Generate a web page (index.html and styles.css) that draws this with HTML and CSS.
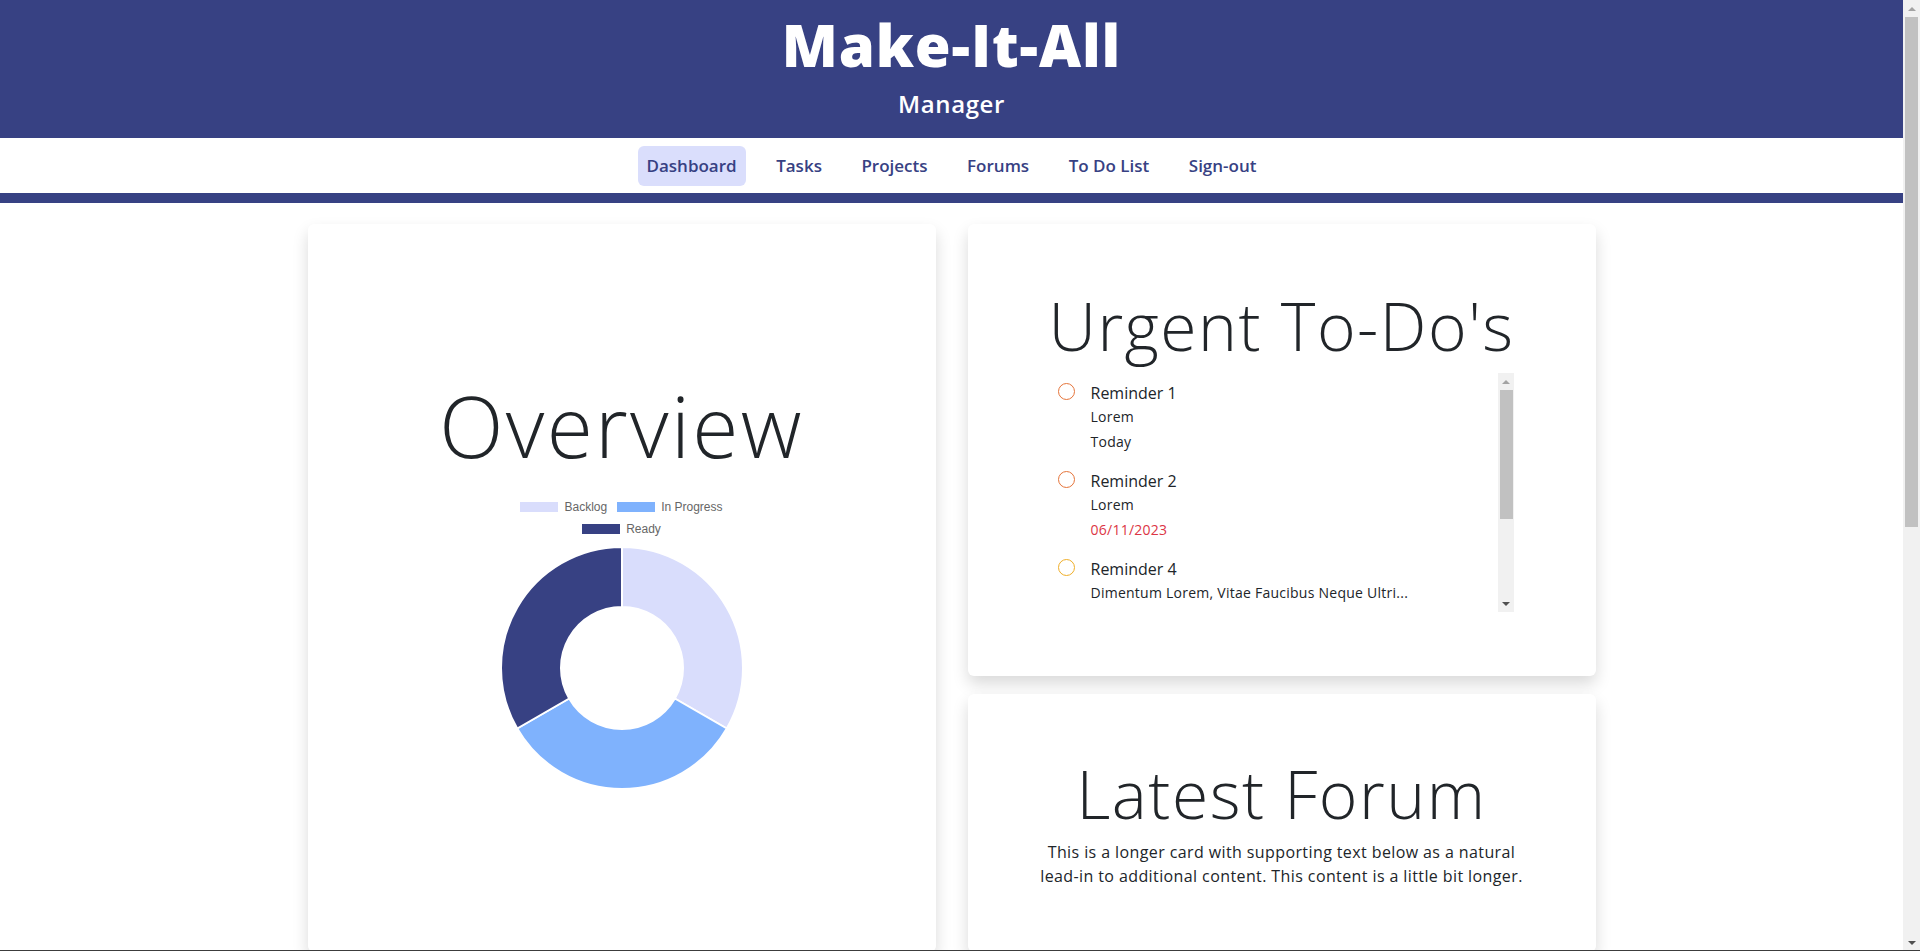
FILE: index.html
```html
<!DOCTYPE html>
<html lang="en">
<head>
<meta charset="utf-8">
<title>Make-It-All Manager - Dashboard</title>
<link rel="stylesheet" href="styles.css">
</head>
<body>
<div class="page">
  <header class="site-header">
    <h1 class="brand">Make-It-All</h1>
    <p class="brand-sub">Manager</p>
  </header>
  <nav class="main-nav">
    <a class="nav-link active" href="#">Dashboard</a>
    <a class="nav-link" href="#">Tasks</a>
    <a class="nav-link" href="#">Projects</a>
    <a class="nav-link" href="#">Forums</a>
    <a class="nav-link" href="#">To Do List</a>
    <a class="nav-link" href="#">Sign-out</a>
  </nav>
  <main class="dashboard">
    <section class="card card-overview">
      <h2 class="display display-lg">Overview</h2>
      <div class="legend">
        <span class="legend-item"><span class="legend-box backlog"></span>Backlog</span>
        <span class="legend-item"><span class="legend-box progress"></span>In Progress</span>
        <span class="legend-item"><span class="legend-box ready"></span>Ready</span>
      </div>
      <svg class="donut" width="244" height="244" viewBox="0 0 244 244">
        <path class="seg-backlog" d="M122,1 A121,121 0 0 1 226.79,182.5 L174.83,152.5 A61,61 0 0 0 122,61 Z"/>
        <path class="seg-progress" d="M226.79,182.5 A121,121 0 0 1 17.21,182.5 L69.17,152.5 A61,61 0 0 0 174.83,152.5 Z"/>
        <path class="seg-ready" d="M17.21,182.5 A121,121 0 0 1 122,1 L122,61 A61,61 0 0 0 69.17,152.5 Z"/>
      </svg>
    </section>
    <div class="right-col">
      <section class="card card-todo">
        <h2 class="display">Urgent To-Do's</h2>
        <div class="todo-box">
          <ul class="todo-list">
            <li class="todo-item">
              <span class="todo-check check-orange"></span>
              <div class="todo-body">
                <div class="todo-title">Reminder 1</div>
                <div class="todo-line">Lorem</div>
                <div class="todo-line">Today</div>
              </div>
            </li>
            <li class="todo-item">
              <span class="todo-check check-orange"></span>
              <div class="todo-body">
                <div class="todo-title">Reminder 2</div>
                <div class="todo-line">Lorem</div>
                <div class="todo-line overdue">06/11/2023</div>
              </div>
            </li>
            <li class="todo-item">
              <span class="todo-check check-yellow"></span>
              <div class="todo-body">
                <div class="todo-title">Reminder 4</div>
                <div class="todo-line">Dimentum Lorem, Vitae Faucibus Neque Ultri...</div>
              </div>
            </li>
          </ul>
          <div class="scrollbar list-scrollbar">
            <span class="sb-arrow sb-up"></span>
            <span class="sb-thumb"></span>
            <span class="sb-arrow sb-down"></span>
          </div>
        </div>
      </section>
      <section class="card card-forum">
        <h2 class="display">Latest Forum</h2>
        <p class="forum-text">This is a longer card with supporting text below as a natural lead-in to additional content. This content is a little bit longer.</p>
      </section>
    </div>
  </main>
</div>
<div class="scrollbar page-scrollbar">
  <span class="sb-arrow sb-up"></span>
  <span class="sb-thumb"></span>
  <span class="sb-arrow sb-down"></span>
</div>
<div class="window-edge"></div>
</body>
</html>
```

FILE: styles.css
```css
* { box-sizing: border-box; }

html, body { margin: 0; padding: 0; }

body {
  font-family: "Open Sans", "Noto Sans", sans-serif;
  color: #212529;
  background: #fff;
}

.page {
  margin-right: 17px;
  min-height: 1710px;
}

/* Scrollbars (drawn) */
.scrollbar {
  display: flex;
  flex-direction: column;
  align-items: center;
  background: #f1f1f1;
}
.sb-arrow {
  flex-shrink: 0;
  width: 100%;
  height: 17px;
  display: flex;
  justify-content: center;
  align-items: center;
}
.sb-arrow::before {
  content: "";
  width: 0;
  height: 0;
  border-left: 4px solid transparent;
  border-right: 4px solid transparent;
}
.sb-up::before { border-bottom: 4px solid #a3a3a3; }
.sb-down { margin-top: auto; }
.sb-down::before { border-top: 4px solid #505050; }
.sb-thumb { background: #c1c1c1; flex-shrink: 0; }

.page-scrollbar {
  position: fixed;
  top: 0;
  right: 0;
  width: 17px;
  height: 100vh;
}
.page-scrollbar .sb-thumb {
  width: 13px;
  height: 510px;
}

.list-scrollbar {
  width: 16px;
  height: 100%;
  flex-shrink: 0;
}
.list-scrollbar .sb-thumb {
  width: 13px;
  margin-left: 1px;
  height: 129px;
}

/* Header */
.site-header {
  background: #374183;
  color: #fff;
  text-align: center;
  height: 138px;
  padding-top: 16px;
}
.brand {
  margin: 0;
  font-size: 58px;
  font-weight: 800;
  line-height: 1;
  letter-spacing: 0.9px;
}
.brand-sub {
  margin: 18px 0 0;
  font-size: 24px;
  font-weight: 600;
  line-height: 1;
  letter-spacing: 0.6px;
}

/* Nav */
.main-nav {
  height: 65px;
  background: #fff;
  border-bottom: 10px solid #374183;
  display: flex;
  justify-content: center;
  align-items: flex-start;
  gap: 21.5px;
  padding-top: 8px;
}
.nav-link {
  display: block;
  padding: 8px 9px;
  line-height: 24px;
  font-size: 17px;
  font-weight: 600;
  color: #374183;
  text-decoration: none;
  border-radius: 6px;
}
.nav-link.active { background: #dadefc; }

/* Main grid */
.dashboard {
  width: 1288px;
  margin: 21px auto 0;
  display: grid;
  grid-template-columns: 628px 628px;
  column-gap: 32px;
}
.right-col {
  display: flex;
  flex-direction: column;
  gap: 18px;
}
.card {
  background: #fff;
  border-radius: 6px;
  box-shadow: 0 8px 16px rgba(0, 0, 0, 0.15);
  text-align: center;
}

.display {
  margin: 0;
  font-size: 66px;
  font-weight: 300;
  line-height: 1.2;
  letter-spacing: 1.5px;
  color: #212529;
}
.display-lg { font-size: 84px; letter-spacing: 2.3px; }

/* Overview */
.card-overview { padding-top: 152px; }
.legend {
  width: 210px;
  margin: 20px auto 0;
  display: flex;
  flex-wrap: wrap;
  justify-content: center;
  column-gap: 10px;
  row-gap: 2px;
  font-family: "Liberation Sans", Arial, sans-serif;
  font-size: 12px;
  color: #666;
}
.legend-item {
  display: flex;
  align-items: center;
  height: 20px;
  white-space: nowrap;
}
.legend-box {
  width: 38px;
  height: 10px;
  margin-right: 6px;
}
.legend-box.backlog { background: #d9ddfc; }
.legend-box.progress { background: #7fb2fd; }
.legend-box.ready { background: #374183; }

.donut { display: block; margin: 7px auto 0; }
.donut path { stroke: #fff; stroke-width: 2; }
.seg-backlog { fill: #d9ddfc; }
.seg-progress { fill: #7fb2fd; }
.seg-ready { fill: #374183; }

/* To-do */
.card-todo { padding: 62px 16px 64px; }
.card-todo .display { margin-bottom: 8px; }
.todo-box {
  display: flex;
  width: 464px;
  height: 239px;
  margin: 0 auto;
}
.todo-list {
  flex: 1;
  list-style: none;
  margin: 0;
  padding: 8px 0 0 8px;
  overflow: hidden;
  text-align: left;
}
.todo-item {
  display: flex;
  align-items: flex-start;
  margin-bottom: 15px;
}
.todo-item:last-child { margin-bottom: 0; }
.todo-check {
  flex-shrink: 0;
  width: 17px;
  height: 17px;
  margin-top: 2px;
  margin-right: 16px;
  border-radius: 50%;
  border: 1.7px solid #e5743a;
}
.todo-check.check-yellow { border-color: #efae28; }
.todo-title { font-size: 16px; line-height: 24px; }
.todo-line { font-size: 14px; line-height: 24px; letter-spacing: 0.25px; }
.todo-line + .todo-line { margin-top: 1px; }
.todo-line.overdue { color: #dc3545; }

/* Forum */
.card-forum { padding: 60px 16px 64px; }
.forum-text {
  max-width: 500px;
  margin: 7px auto 0;
  font-size: 16px;
  line-height: 24px;
  letter-spacing: 0.4px;
}

.window-edge {
  position: fixed;
  left: 0;
  right: 0;
  bottom: 0;
  height: 1px;
  background: #3c3c3c;
}
```
